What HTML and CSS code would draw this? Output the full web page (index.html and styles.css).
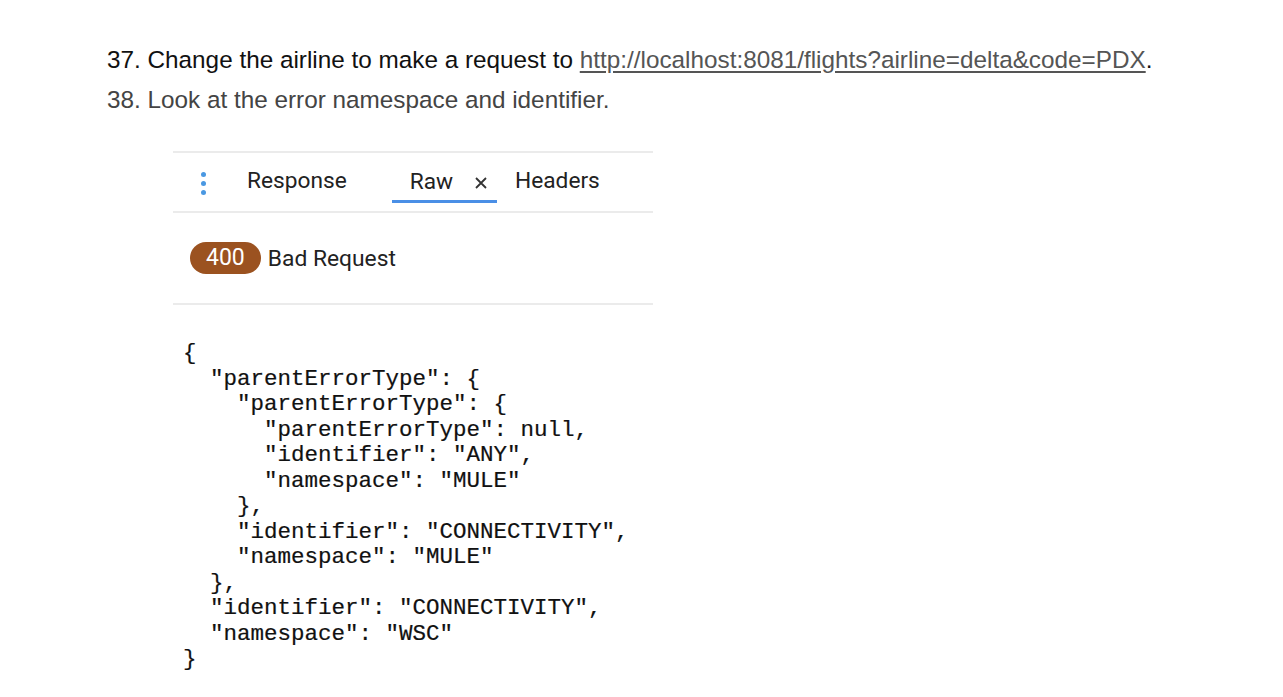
FILE: index.html
```html
<!DOCTYPE html>
<html>
<head>
<meta charset="utf-8">
<link rel="stylesheet" href="styles.css">
</head>
<body>
<div class="doc">
  <ol class="steps" start="37">
    <li class="step step-dark">Change the airline to make a request to <a class="link" href="#">http://localhost:8081/flights?airline=delta&amp;code=PDX</a>.</li>
    <li class="step step-gray">Look at the error namespace and identifier.</li>
  </ol>
  <div class="shot">
    <div class="tabs">
      <div class="dots"><span></span><span></span><span></span></div>
      <div class="tab tab-response">Response</div>
      <div class="tab tab-raw">
        <span>Raw</span>
        <svg class="close" width="12" height="12" viewBox="0 0 12 12"><path d="M1 1 L11 11 M11 1 L1 11" stroke="#333" stroke-width="1.8" fill="none"/></svg>
      </div>
      <div class="tab tab-headers">Headers</div>
    </div>
    <div class="status">
      <span class="badge">400</span>
      <span class="status-text">Bad Request</span>
    </div>
    <pre class="json">{
  "parentErrorType": {
    "parentErrorType": {
      "parentErrorType": null,
      "identifier": "ANY",
      "namespace": "MULE"
    },
    "identifier": "CONNECTIVITY",
    "namespace": "MULE"
  },
  "identifier": "CONNECTIVITY",
  "namespace": "WSC"
}</pre>
  </div>
</div>
</body>
</html>
```
FILE: styles.css
```css
html, body {
  margin: 0;
  padding: 0;
  background: #ffffff;
}
.doc {
  padding: 40px 0 0 107px;
}
.steps {
  list-style: none;
  margin: 0;
  padding: 0;
  font-family: "Liberation Sans", Arial, sans-serif;
  font-size: 24.3px;
}
.step {
  line-height: 40px;
  height: 40px;
}
.step-dark { color: #111111; }
.step-dark::before { content: "37. "; }
.step-gray { color: #444444; }
.step-gray::before { content: "38. "; }
.link {
  color: #555555;
  text-decoration: underline;
  text-underline-offset: 3px;
}
.shot {
  width: 480px;
  margin: 31px 0 0 66px;
  font-family: Roboto, "Noto Sans", sans-serif;
  color: #222222;
}
.tabs {
  display: flex;
  align-items: center;
  height: 58px;
  border-top: 2px solid #ebebeb;
  border-bottom: 2px solid #ebebeb;
  font-size: 22.7px;
}
.dots {
  display: flex;
  flex-direction: column;
  gap: 4px;
  margin-left: 28px;
  margin-top: 2px;
}
.dots span {
  width: 5px;
  height: 5px;
  border-radius: 50%;
  background: #4a98e2;
}
.tab {
  line-height: 26px;
  margin-top: -2px;
}
.tab-response {
  margin-left: 41px;
}
.tab-raw {
  display: flex;
  align-items: center;
  gap: 22px;
  margin-left: 45px;
  padding: 8px 10px 5px 18px;
  border-bottom: 3px solid #4a8fe6;
  margin-top: 0;
}
.close {
  display: block;
  margin-top: 1px;
}
.tab-headers {
  margin-left: 18px;
}
.status {
  display: flex;
  align-items: center;
  height: 90px;
  border-bottom: 2px solid #ebebeb;
}
.badge {
  margin-left: 17px;
  background: #9b5220;
  color: #ffffff;
  font-size: 23px;
  line-height: 32px;
  padding: 0 16px;
  border-radius: 16px;
}
.status-text {
  margin-left: 7px;
  font-size: 22.8px;
}
.json {
  margin: 36px 0 0 10px;
  font-family: "Liberation Mono", "Courier New", monospace;
  font-size: 22.5px;
  line-height: 25.5px;
  color: #111111;
  -webkit-text-stroke: 0.2px #111111;
}
```
